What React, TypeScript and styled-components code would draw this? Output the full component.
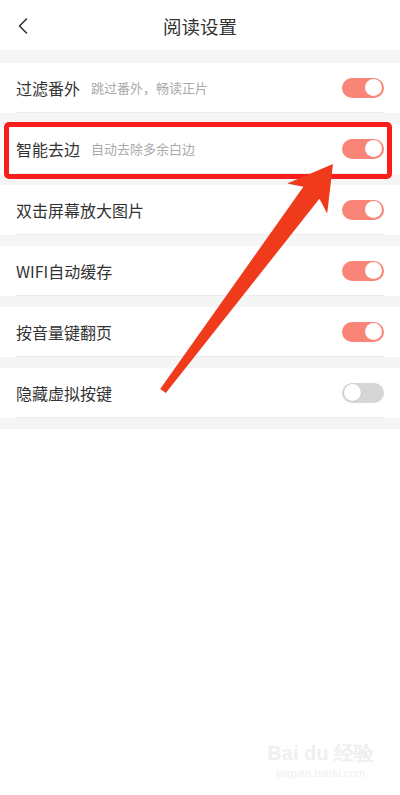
import React from 'react'
import styled, { createGlobalStyle } from 'styled-components'

interface Setting {
  label: string
  hint?: string
  on: boolean
}

// order as shown on the page
const settings: Setting[] = [
  { label: '过滤番外', hint: '跳过番外，畅读正片', on: true },
  { label: '智能去边', hint: '自动去除多余白边', on: true },
  { label: '双击屏幕放大图片', on: true },
  { label: 'WIFI自动缓存', on: true },
  { label: '按音量键翻页', on: true },
  { label: '隐藏虚拟按键', on: false },
]

const GlobalStyle = createGlobalStyle`
  html, body {
    margin: 0;
    padding: 0;
    background: #fff;
  }
  body {
    font-family: 'Noto Sans CJK SC', 'Noto Sans', sans-serif;
    color: #333;
  }
`

const Toggle = ({ on }: { on: boolean }) => (
  <Track $on={on}>
    <Knob $on={on} />
  </Track>
)

export default function App() {
  return (
    <Page>
      <GlobalStyle />
      <Header>
        <BackButton aria-label="back">
          <svg width="12" height="18" viewBox="0 0 12 18">
            <path
              d="M9.5 2 L2.5 9 L9.5 16"
              fill="none"
              stroke="#333"
              strokeWidth="1.6"
              strokeLinecap="round"
              strokeLinejoin="round"
            />
          </svg>
        </BackButton>
        <Title>阅读设置</Title>
        <span />
      </Header>

      <List>
        {settings.map(s => (
          <Row key={s.label}>
            <RowBody>
              <Label>{s.label}</Label>
              {s.hint && <Hint>{s.hint}</Hint>}
              <Toggle on={s.on} />
            </RowBody>
          </Row>
        ))}
      </List>

      {/* annotation drawn over the screenshot */}
      <Highlight />
      <Arrow width="400" height="420" viewBox="0 0 400 420">
        <polygon
          points="333,164 327.2,213.4 319.4,198.8 165.8,393.1 160.2,388.9 303.4,186.8 287.2,183.4"
          fill="#ef3a1b"
        />
      </Arrow>

      <Watermark>
        <WmBrand>Bai du 经验</WmBrand>
        <WmUrl>jingyan.baidu.com</WmUrl>
      </Watermark>
    </Page>
  )
}

const Page = styled.div`
  position: relative;
  width: 400px;
  min-height: 795px;
  background: #fff;
  overflow: hidden;
`

const Header = styled.header`
  height: 50px;
  display: grid;
  grid-template-columns: 48px 1fr 48px;
  align-items: center;
  background: #fff;
`

const BackButton = styled.button`
  border: 0;
  background: none;
  padding: 0 0 0 17px;
  height: 50px;
  display: flex;
  align-items: center;
  cursor: pointer;
`

const Title = styled.h1`
  margin: 0;
  text-align: center;
  font-size: 18.5px;
  font-weight: 400;
  color: #333;
  line-height: 50px;
  padding-top: 1px;
`

const List = styled.div`
  background: #f5f5f5;
  display: flex;
  flex-direction: column;
  gap: 11px;
  padding: 13px 0 11px;
`

const Row = styled.div`
  background: #fff;
  padding: 0 16px;
`

const RowBody = styled.div`
  height: 49px;
  border-bottom: 1px solid #ebebeb;
  display: flex;
  align-items: center;
`

const Label = styled.span`
  font-size: 16px;
  color: #333;
`

const Hint = styled.span`
  font-size: 13px;
  color: #aaa;
  margin-left: 11px;
`

const Track = styled.span<{ $on: boolean }>`
  margin-left: auto;
  width: 42px;
  height: 20px;
  border-radius: 10px;
  background: ${p => (p.$on ? '#f98478' : '#d6d6d6')};
  display: flex;
  align-items: center;
  justify-content: ${p => (p.$on ? 'flex-end' : 'flex-start')};
  padding: 0 2px;
  box-sizing: border-box;
`

const Knob = styled.span<{ $on: boolean }>`
  width: 17px;
  height: 17px;
  border-radius: 50%;
  background: #fff;
  box-shadow: ${p => (p.$on ? 'none' : '0 0 0 0.5px #c4c4c4')};
`

const Highlight = styled.div`
  position: absolute;
  left: 4px;
  top: 122px;
  width: 388px;
  height: 57px;
  box-sizing: border-box;
  border: 5px solid #fb1c1c;
  border-radius: 5px;
  pointer-events: none;
`

const Arrow = styled.svg`
  position: absolute;
  left: 0;
  top: 0;
  pointer-events: none;
`

const Watermark = styled.div`
  position: absolute;
  right: 26px;
  bottom: 16px;
  display: flex;
  flex-direction: column;
  align-items: center;
  color: #efefef;
  font-family: 'Liberation Sans', sans-serif;
  pointer-events: none;
`

const WmBrand = styled.span`
  font-size: 20px;
  font-weight: 700;
`

const WmUrl = styled.span`
  font-size: 11px;
`
